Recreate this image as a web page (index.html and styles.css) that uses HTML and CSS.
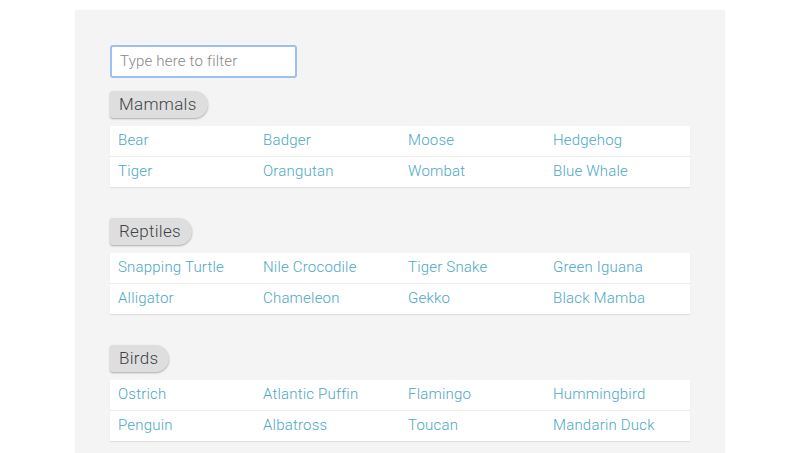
FILE: index.html
```html
<!DOCTYPE html>
<html>
<head>
<meta charset="utf-8">
<link rel="stylesheet" href="styles.css">
</head>
<body>
<div class="panel">
  <input class="filter" type="text" placeholder="Type here to filter" autofocus>
  <section class="group">
    <div class="pill">Mammals</div>
    <div class="table">
      <div class="row"><a>Bear</a><a>Badger</a><a>Moose</a><a>Hedgehog</a></div>
      <div class="row"><a>Tiger</a><a>Orangutan</a><a>Wombat</a><a>Blue Whale</a></div>
    </div>
  </section>
  <section class="group">
    <div class="pill">Reptiles</div>
    <div class="table">
      <div class="row"><a>Snapping Turtle</a><a>Nile Crocodile</a><a>Tiger Snake</a><a>Green Iguana</a></div>
      <div class="row"><a>Alligator</a><a>Chameleon</a><a>Gekko</a><a>Black Mamba</a></div>
    </div>
  </section>
  <section class="group">
    <div class="pill">Birds</div>
    <div class="table">
      <div class="row"><a>Ostrich</a><a>Atlantic Puffin</a><a>Flamingo</a><a>Hummingbird</a></div>
      <div class="row"><a>Penguin</a><a>Albatross</a><a>Toucan</a><a>Mandarin Duck</a></div>
    </div>
  </section>
</div>
</body>
</html>
```
FILE: styles.css
```css
html, body {
  margin: 0;
  padding: 0;
  background: #fff;
  height: 100%;
  overflow: hidden;
}
body {
  font-family: Roboto, "Liberation Sans", sans-serif;
  font-weight: 300;
  padding-top: 10px;
}
.panel {
  width: 650px;
  margin: 0 0 0 75px;
  box-sizing: border-box;
  padding: 35px 35px 20px;
  background: #f4f4f4;
  border-radius: 3px;
  box-shadow: 0 0 2px rgba(0,0,0,0.06);
  min-height: 600px;
}
.filter {
  display: block;
  width: 187px;
  height: 33px;
  box-sizing: border-box;
  border: 2px solid #9ec0ee;
  border-radius: 3px;
  padding: 0 8px 2px;
  font-family: Roboto, "Liberation Sans", sans-serif;
  font-weight: 300;
  font-size: 15px;
  letter-spacing: 0.2px;
  color: #333;
  background: #fff;
  outline: none;
  margin-bottom: 13px;
}
.filter::placeholder {
  color: #888;
}
.group {
  margin-bottom: 31px;
}
.pill {
  display: inline-block;
  height: 27px;
  line-height: 26px;
  padding: 0 11px 0 9px;
  background: #dedede;
  color: #3e4448;
  font-size: 17px;
  font-weight: 300;
  letter-spacing: 0.3px;
  border-radius: 3px 14px 14px 3px;
  box-shadow: 0 1px 2px rgba(0,0,0,0.3);
  margin-bottom: 8px;
}
.table {
  width: 580px;
  background: #fff;
  box-shadow: 0 1px 1px rgba(0,0,0,0.08);
}
.row {
  display: grid;
  grid-template-columns: repeat(4, 145px);
  height: 30px;
  align-items: start;
}
.row + .row {
  border-top: 1px solid #ececec;
}
.row a {
  padding-left: 8px;
  color: #4ba8c6;
  font-size: 15px;
  letter-spacing: 0.2px;
  white-space: nowrap;
  line-height: 28px;
}
```
